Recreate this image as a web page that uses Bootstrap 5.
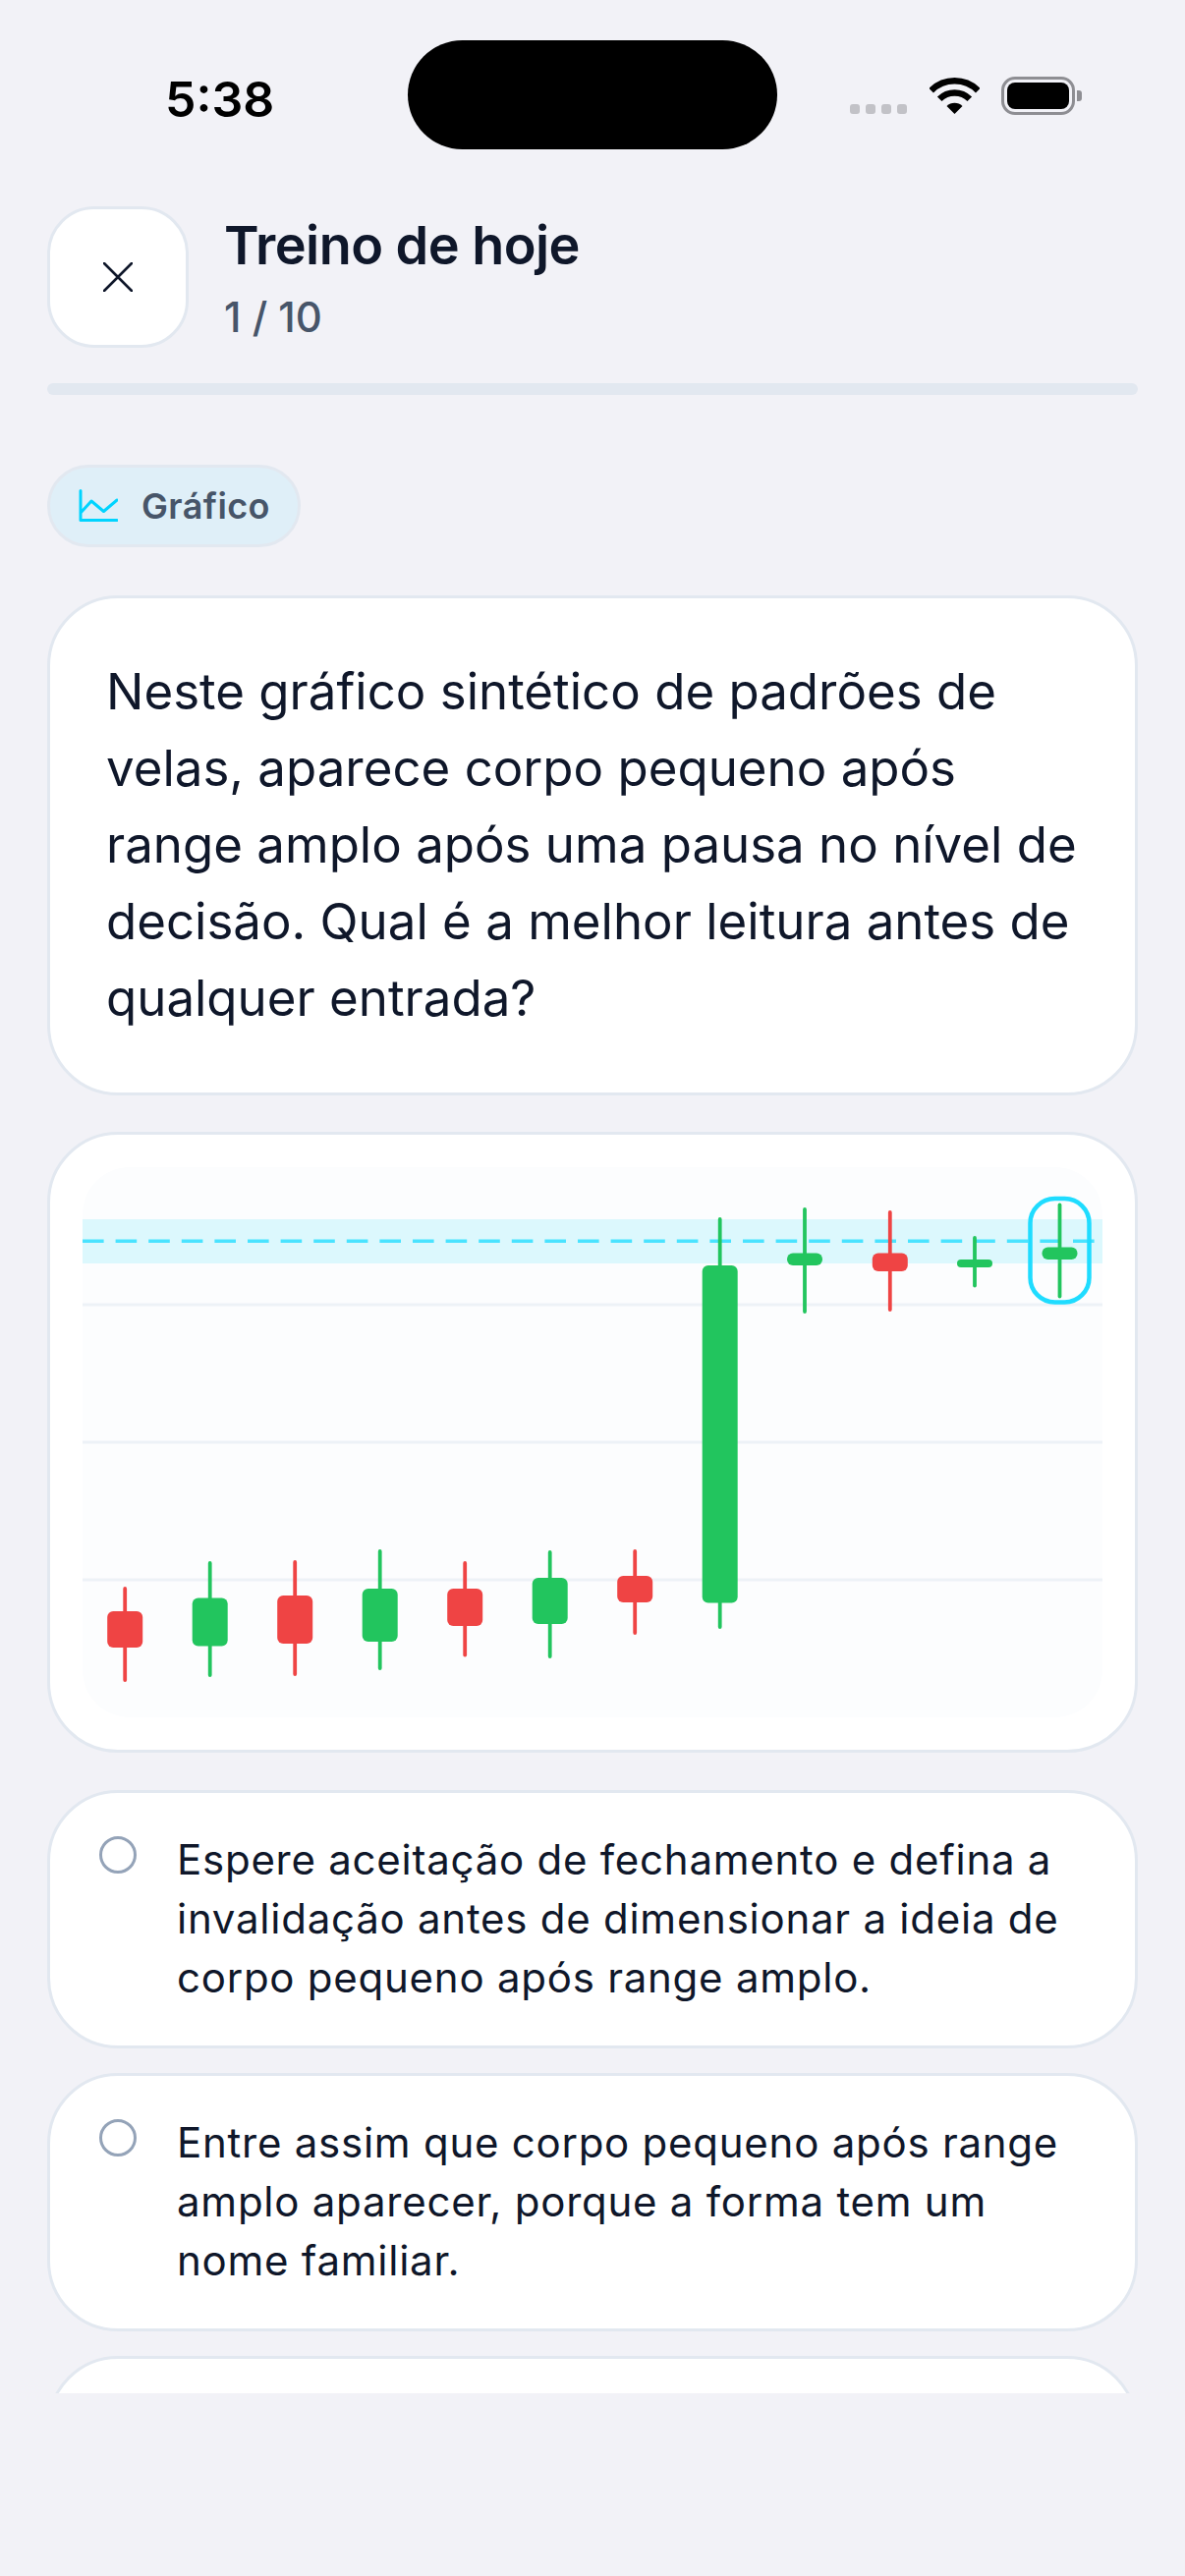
<!DOCTYPE html>
<html lang="pt-BR">
<head>
    <meta charset="UTF-8">
    <meta name="viewport" content="width=device-width, initial-scale=1.0">
    <title>Treino de hoje</title>
    <link href="https://cdn.jsdelivr.net/npm/bootstrap@5.3.0/dist/css/bootstrap.min.css" rel="stylesheet">
    <style>
        body { background: #f2f2f7; font-family: "Inter", "Liberation Sans", sans-serif; color: #0f172a; }
        .tela { width: 1206px; height: 2622px; overflow: hidden; }

        /* barra de status */
        .status-bar { height: 210px; padding-top: 41px; }
        .hora { width: 415px; padding: 30px 0 0 168px; font-size: 50px; line-height: 60px; font-weight: 600; color: #000; }
        .ilha { width: 376px; height: 111px; border-radius: 56px; background: #000; }
        .status-icones { margin: 37px 0 0 74px; }
        .sinal { gap: 6px; margin: 28px 23px 0 0; }
        .sinal i { width: 10px; height: 10px; border-radius: 3px; background: #c2c2c7; }
        .wifi { margin: 1px 22px 0 0; }
        .bateria { width: 75px; height: 39px; padding: 3px; border: 3px solid #8e8e93; border-radius: 14px; }
        .bateria i { width: 100%; height: 100%; border-radius: 8px; background: #000; }
        .bateria-ponta { width: 5px; height: 11px; margin: 14px 0 0 2px; border-radius: 0 3px 3px 0; background: #8e8e93; }

        /* topo */
        .topo { padding: 0 48px; }
        .btn-fechar { width: 144px; height: 144px; padding: 0; background: #fff; border: 3px solid #e2e8f0; border-radius: 48px; }
        .btn-fechar:hover { background: #fff; border-color: #e2e8f0; }
        .cabecalho-texto { padding: 7px 0 0 36px; }
        .titulo { margin: 0; font-size: 54px; line-height: 66px; font-weight: 600; color: #0f172a; letter-spacing: -.55px; }
        .contador { margin-top: 15px; font-size: 42px; line-height: 50px; font-weight: 500; color: #475569; }
        .barra { height: 12px; margin-top: 36px; background: #e2e8f0; border-radius: 6px; }

        .conteudo { height: 1963px; margin-top: 71px; padding: 0 48px; }
        .selo { width: 258px; height: 84px; gap: 24px; padding-left: 29px; background: #dfeff8; border: 3px solid #e2e8f0; font-size: 36px; font-weight: 600; color: #475569; letter-spacing: .4px; }
        .cartao { background: #fff; border: 3px solid #e2e8f0; border-radius: 72px; }
        .pergunta { margin-top: 49px; padding: 56px 40px 56px 57px; height: 509px; font-size: 51px; line-height: 78px; }
        .pergunta p { margin: 0; }
        .grafico-card { height: 632px; margin-top: 37px; padding: 33px; }
        .grafico { height: 560px; background: #fcfdfe; border-radius: 48px; }
        .grafico svg { display: block; overflow: visible; }
        .opcoes { margin-top: 38px; gap: 25px; }
        .opcao { height: 263px; padding: 38px 40px 0 50px; gap: 41px; font-size: 42px; line-height: 60px; letter-spacing: .75px; }
        .radio-vazio { flex: none; width: 38px; height: 38px; margin-top: 6px; border: 3.5px solid #94a3b8; border-radius: 50%; }
    </style>
</head>
<body>

    <div class="tela">

        <div class="status-bar d-flex align-items-start">
            <div class="hora">5:38</div>
            <div class="ilha"></div>
            <div class="status-icones d-flex align-items-start">
                <div class="sinal d-flex"><i></i><i></i><i></i><i></i></div>
                <svg class="wifi" width="51" height="37" viewBox="0 0 51 37">
                    <path d="M1.7 13.2A33.7 33.7 0 0 1 49.3 13.2" fill="none" stroke="#000" stroke-width="6.5"/>
                    <path d="M10.2 21.7A21.7 21.7 0 0 1 40.8 21.7" fill="none" stroke="#000" stroke-width="6.5"/>
                    <path d="M25.5 37L17.5 29A11.3 11.3 0 0 1 33.5 29Z" fill="#000"/>
                </svg>
                <div class="bateria"><i class="d-block"></i></div>
                <div class="bateria-ponta"></div>
            </div>
        </div>

        <div class="topo">
            <div class="d-flex align-items-start gap-0">
                <button type="button" class="btn btn-fechar d-flex align-items-center justify-content-center flex-shrink-0" aria-label="Fechar">
                    <svg width="30" height="30" viewBox="0 0 30 30"><path d="M1 1L29 29M29 1L1 29" stroke="#0f172a" stroke-width="2.6" stroke-linecap="round"/></svg>
                </button>
                <div class="cabecalho-texto">
                    <h1 class="titulo">Treino de hoje</h1>
                    <div class="contador">1 / 10</div>
                </div>
            </div>
            <div class="barra"></div>
        </div>

        <div class="conteudo overflow-hidden">
            <div class="selo d-flex align-items-center rounded-pill">
                <svg width="40" height="34" viewBox="0 0 40 34" class="flex-shrink-0">
                    <path d="M2 1.5V31.5H39M2 24L13 12L25.5 22.5L39 11" fill="none" stroke="#00d4ff" stroke-width="3" stroke-linecap="round" stroke-linejoin="round"/>
                </svg>
                <span>Gráfico</span>
            </div>

            <div class="card cartao pergunta">
                <p>Neste gráfico sintético de padrões de velas, aparece corpo pequeno após range amplo após uma pausa no nível de decisão. Qual é a melhor leitura antes de qualquer entrada?</p>
            </div>

            <div class="card cartao grafico-card">
                <div class="grafico">
                    <svg id="graficoVelas" width="1038" height="560" viewBox="84 1188 1038 560"></svg>
                </div>
            </div>

            <div class="opcoes d-flex flex-column">
                <div class="card cartao opcao flex-row align-items-start">
                    <span class="radio-vazio"></span>
                    <span>Espere aceitação de fechamento e defina a invalidação antes de dimensionar a ideia de corpo pequeno após range amplo.</span>
                </div>
                <div class="card cartao opcao flex-row align-items-start">
                    <span class="radio-vazio"></span>
                    <span>Entre assim que corpo pequeno após range amplo aparecer, porque a forma tem um nome familiar.</span>
                </div>
                <div class="card cartao opcao flex-row align-items-start flex-shrink-0"></div>
            </div>
        </div>

    </div>

    <script>
        // x, topo pavio, base pavio, topo corpo, base corpo, cor
        const VERDE = "#22c55e";
        const VERMELHO = "#ef4444";
        const velas = [
            [127.2, 1615, 1712, 1640, 1677, VERMELHO],
            [213.7, 1589, 1707, 1626.5, 1675.5, VERDE],
            [300.2, 1588, 1706, 1624, 1673, VERMELHO],
            [386.7, 1577, 1700, 1617, 1671, VERDE],
            [473.2, 1589, 1686.5, 1617, 1655, VERMELHO],
            [559.7, 1578, 1688, 1606, 1653, VERDE],
            [646.2, 1577, 1664, 1604, 1631, VERMELHO],
            [732.7, 1239, 1658, 1288, 1631.5, VERDE],
            [819, 1229, 1337, 1275.5, 1288, VERDE],
            [905.8, 1232, 1335, 1275.5, 1294, VERMELHO],
            [992, 1258, 1310.5, 1282, 1290, VERDE],
            [1078.5, 1224.5, 1321.5, 1269.5, 1282, VERDE]
        ];

        let svg = `<rect x="84" y="1241" width="1038" height="45" fill="#dcf8fd"/>`;
        [1328, 1468, 1608].forEach(y => {
            svg += `<rect x="84" y="${y - 1.5}" width="1038" height="3" fill="#edf2f7"/>`;
        });
        svg += `<line x1="84" y1="1263.3" x2="1114" y2="1263.3" stroke="#4ae3ff" stroke-width="3.5" stroke-dasharray="21.6 12"/>`;
        velas.forEach(([x, pt, pb, ct, cb, cor]) => {
            const altura = cb - ct;
            svg += `<line x1="${x}" y1="${pt + 1.9}" x2="${x}" y2="${pb - 1.9}" stroke="${cor}" stroke-width="3.8" stroke-linecap="round"/>`;
            svg += `<rect x="${x - 18}" y="${ct}" width="36" height="${altura}" rx="${Math.min(6, altura / 2)}" fill="${cor}"/>`;
        });
        svg += `<rect x="1048.5" y="1220" width="60" height="105.5" rx="25" fill="none" stroke="#1fdcff" stroke-width="4.5"/>`;
        document.getElementById("graficoVelas").innerHTML = svg;
    </script>
    <script src="https://cdn.jsdelivr.net/npm/bootstrap@5.3.0/dist/js/bootstrap.bundle.min.js"></script>
</body>
</html>
